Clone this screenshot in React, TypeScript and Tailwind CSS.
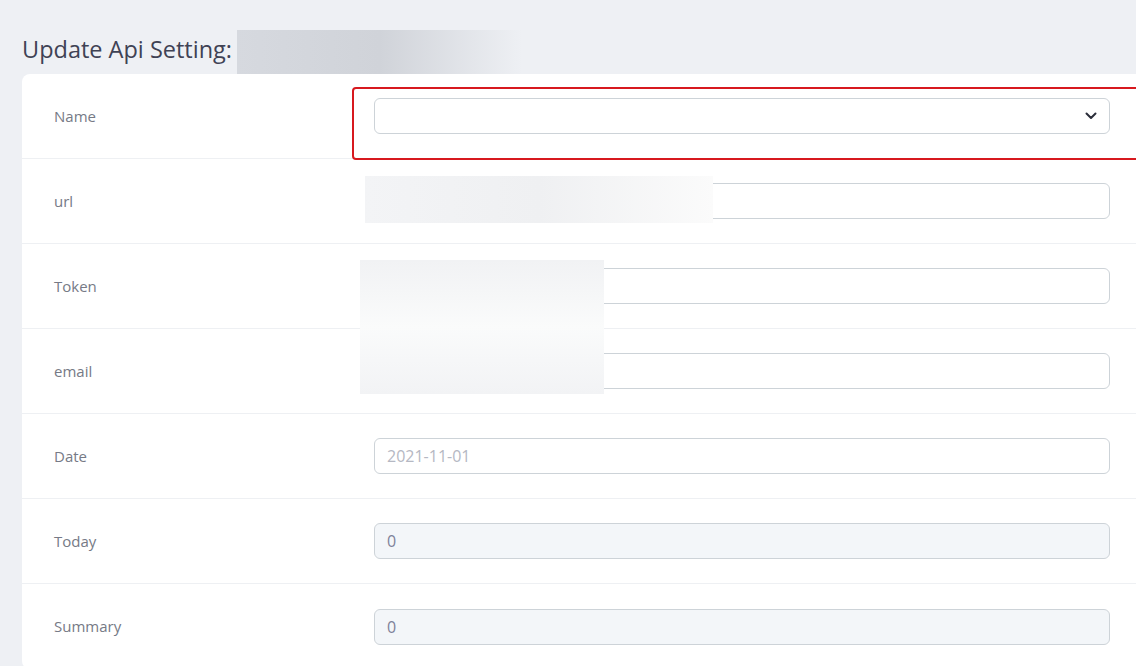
export default function App() {
  const rows = [
    { label: "Name", kind: "select" },
    { label: "url", kind: "text" },
    { label: "Token", kind: "text" },
    { label: "email", kind: "text" },
    { label: "Date", kind: "date" },
    { label: "Today", kind: "disabled" },
    { label: "Summary", kind: "disabled" },
  ]

  return (
    <div className="relative h-[666px] w-[1136px] overflow-hidden bg-[#eef0f4] pl-[22px] pt-[30px] font-['Open_Sans','Noto_Sans',sans-serif]">
      {/* Title */}
      <div className="flex h-[44px] items-center">
        <h1 className="-mt-[6px] text-[23.5px] leading-[44px] text-[#3f4254]">Update Api Setting:</h1>
        <div className="ml-[5px] h-[44px] w-[285px] bg-gradient-to-r from-[#d6d9df] via-[#d0d3d9] to-[#eef0f4]" />
      </div>

      {/* Card */}
      <div className="w-[1150px] rounded-lg bg-white">
        {rows.map((row) => (
          <div key={row.label} className="flex h-[85px] items-center border-b border-[#eef0f3] last:border-b-0">
            <div className="w-[352px] pl-[32px] text-[15px] text-[#767a86]">{row.label}</div>
            {row.kind === "select" && (
              <div className="flex h-[36px] w-[736px] items-center justify-end rounded-[6px] border border-[#cdd3d8] bg-white pr-[12px]">
                <svg width="12" height="8" viewBox="0 0 12 8" fill="none">
                  <path d="M1.5 1.5 6 6l4.5-4.5" stroke="#2b2e3a" strokeWidth="2" strokeLinecap="round" strokeLinejoin="round" />
                </svg>
              </div>
            )}
            {row.kind === "text" && (
              <div className="h-[36px] w-[736px] rounded-[6px] border border-[#cdd3d8] bg-white" />
            )}
            {row.kind === "date" && (
              <div className="flex h-[36px] w-[736px] items-center rounded-[6px] border border-[#cdd3d8] bg-white pl-[12px] text-[16px] text-[#b5b8c3]">
                2021-11-01
              </div>
            )}
            {row.kind === "disabled" && (
              <div className="flex h-[36px] w-[736px] items-center rounded-[6px] border border-[#cdd3d8] bg-[#f3f6f9] pl-[12px] text-[16px] text-[#7e8299]">
                0
              </div>
            )}
          </div>
        ))}
      </div>

      {/* Redacted overlays */}
      <div className="absolute left-[365px] top-[176px] h-[47px] w-[348px] bg-gradient-to-r from-[#f3f4f6] via-[#eff0f2] to-[#fbfbfb]" />
      <div className="absolute left-[360px] top-[260px] h-[134px] w-[244px] bg-gradient-to-b from-[#f1f2f4] via-[#fafbfb] to-[#f2f3f5]" />

      {/* Annotation */}
      <div className="absolute left-[352px] top-[87px] h-[73px] w-[800px] rounded-[4px] border-2 border-[#d7191f]" />
    </div>
  )
}
